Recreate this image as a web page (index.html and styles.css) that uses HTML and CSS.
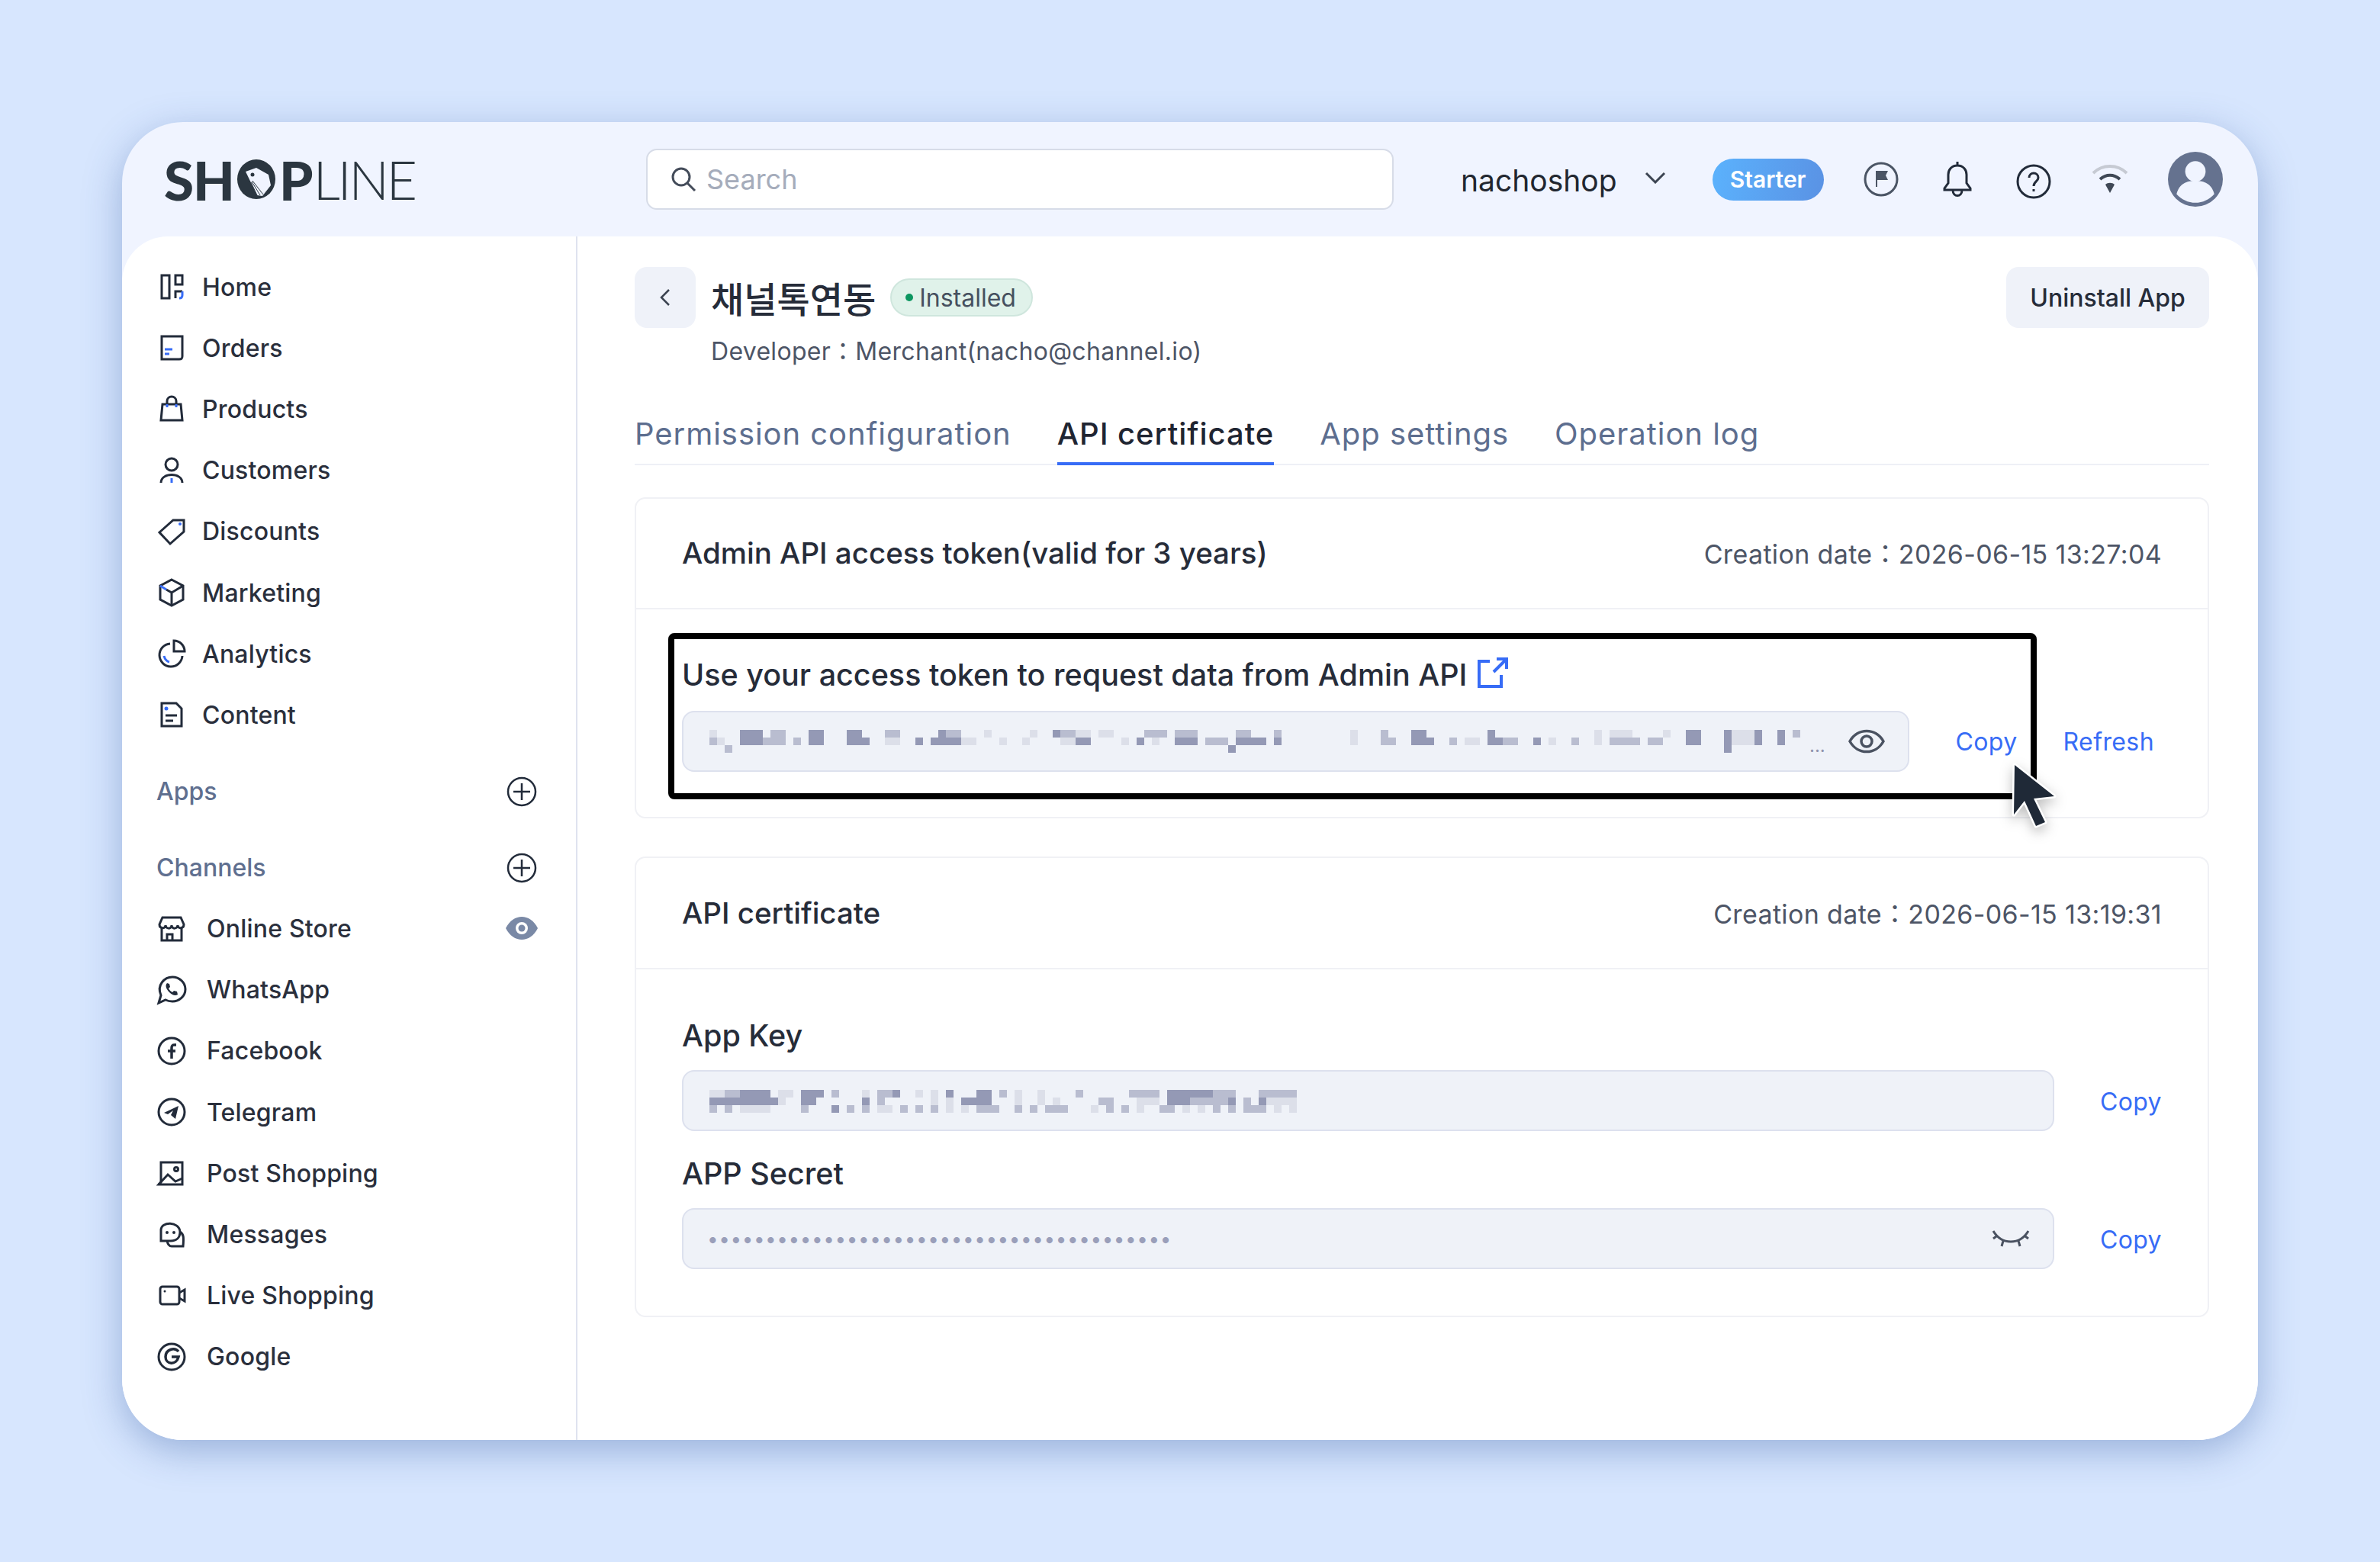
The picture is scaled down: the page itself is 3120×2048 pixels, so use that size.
FILE: index.html
```html
<!DOCTYPE html>
<html lang="en">
<head>
    <meta charset="UTF-8">
    <title>SHOPLINE</title>
    <link rel="stylesheet" href="styles.css">
</head>
<body>
<div class="window">
    <header class="topbar">
        <div class="logo">
            <span class="logo-b">SH</span>
            <svg class="logo-o" width="50" height="52" viewBox="0 0 50 52">
                <ellipse cx="25" cy="26" rx="25" ry="26" fill="#2b3640"/>
                <path d="M11 16 25 11l16 9 3 14-11 14-7-1z" fill="#f0f4ff"/>
                <path d="M26 47 18 30M30 47 19 29M34 46 20 28" stroke="#2b3640" stroke-width="1" fill="none"/>
                <circle cx="20" cy="20" r="2.5" fill="#2b3640"/>
            </svg>
            <span class="logo-b">P</span>
            <span class="logo-l">LINE</span>
        </div>
        <div class="search">
            <svg class="ico" width="38" height="38" viewBox="0 0 38 38"><circle cx="16" cy="16" r="11"/><path d="m24 24 10 10"/></svg>
            <span>Search</span>
        </div>
        <div class="shop">nachoshop</div>
        <svg class="ico chev" width="28" height="16" viewBox="0 0 28 16"><path d="m2 2 12 12L26 2"/></svg>
        <div class="plan">Starter</div>
        <div class="tools">
            <svg class="ico" width="48" height="48" viewBox="0 0 48 48"><circle cx="24" cy="24" r="21" stroke="#4b5565"/><path d="M17 13h16l-3 6 3 6H19v9h-2z" fill="#4b5565" stroke="none"/></svg>
            <svg class="ico" width="48" height="48" viewBox="0 0 48 48"><path d="M24 1v5M24 6c-8 0-12 6-12 12v11l-5 7v2h34v-2l-5-7V18c0-6-4-12-12-12zM18 38c0 10 12 10 12 0"/></svg>
            <svg class="ico tool-low" width="48" height="48" viewBox="0 0 48 48"><circle cx="24" cy="24" r="21"/><path d="M18 19c0-8 12-8 12 0 0 5-6 5-6 11"/><path d="M24 34v3"/></svg>
            <svg width="48" height="40" viewBox="0 0 48 40"><path d="M2 12C14 0 34 0 46 12" fill="none" stroke="#c6cad3" stroke-width="4"/><path d="M11 20c8-7 18-7 26 0M17 26" fill="none" stroke="#3f4856" stroke-width="4"/><path d="M18 27l6 11 6-11c-3-3-9-3-12 0z" fill="#3f4856"/></svg>
            <svg class="avatar" width="72" height="72" viewBox="0 0 70 70"><circle cx="35" cy="35" r="35" fill="#65728f"/><circle cx="35" cy="25" r="13" fill="#f0f4ff"/><path d="M11 54c3-13 13-17 24-17s21 4 24 17c-6 7-15 11-24 11s-18-4-24-11z" fill="#f0f4ff"/></svg>
        </div>
    </header>

    <div class="body">
        <aside class="side">
            <a class="item"><svg class="ico nav-ico" viewBox="0 0 40 40"><rect x="7" y="5" width="10" height="30"/><rect x="25" y="5" width="9" height="12"/><path d="M25 35v-9h9"/><path class="acc" d="M34 26v5c0 3-2 4-4 4"/></svg>Home</a>
            <a class="item"><svg class="ico nav-ico" viewBox="0 0 40 40"><path d="M7 5h27v26c0 3-1 4-4 4H7z"/><path class="acc" d="M11 22h10M11 28h6"/></svg>Orders</a>
            <a class="item"><svg class="ico nav-ico" viewBox="0 0 40 40"><path d="M8 14h24l2 21H6z"/><path d="M14 14V10c0-8 12-8 12 0v4"/><path class="acc" d="M14 14v4M26 14v4"/></svg>Products</a>
            <a class="item"><svg class="ico nav-ico" viewBox="0 0 40 40"><circle cx="20" cy="12" r="8"/><path d="M6 36c0-14 28-14 28 0"/><path class="acc" d="M20 30v6"/></svg>Customers</a>
            <a class="item"><svg class="ico nav-ico" viewBox="0 0 40 40"><path d="M22 5h14v15L18 36 4 21z"/><circle class="acc-fill" cx="31" cy="10" r="2"/></svg>Discounts</a>
            <a class="item"><svg class="ico nav-ico" viewBox="0 0 40 40"><path d="m20 3 15 8v18l-15 8-15-8V11z"/><path d="M35 11 20 20v17M13 16l7 4"/><path class="acc" d="m5 11 8 5"/></svg>Marketing</a>
            <a class="item"><svg class="ico nav-ico" viewBox="0 0 40 40"><path d="M18 7a15 15 0 1 0 16 16"/><path d="M23 3a14 14 0 0 1 14 14H23z"/><path class="acc" d="M10 23c1 4 3 7 7 8"/></svg>Analytics</a>
            <a class="item"><svg class="ico nav-ico" viewBox="0 0 40 40"><path d="M7 5h19l7 7v23H7z"/><path d="M12 21h15M12 28h10"/><circle class="acc-fill" cx="13" cy="12" r="2.5"/></svg>Content</a>

            <div class="group first">Apps<svg class="ico plus" viewBox="0 0 40 40"><circle cx="20" cy="20" r="18"/><path d="M20 9v22M9 20h22"/></svg></div>
            <div class="group chan-head">Channels<svg class="ico plus" viewBox="0 0 40 40"><circle cx="20" cy="20" r="18"/><path d="M20 9v22M9 20h22"/></svg></div>

            <a class="item channel"><svg class="ico nav-ico" viewBox="0 0 40 40"><path d="M8 5h24l4 9c0 6-8 6-8 1 0 5-8 6-8 0 0 6-8 5-8 0 0 5-8 5-8-1z"/><path d="M7 19v16h26V19M14 35v-8h7v8"/></svg>Online Store<svg class="eye-fill" width="42" height="30" viewBox="0 0 42 30"><path d="M0 15C10-5 32-5 42 15 32 35 10 35 0 15z" fill="#7a89a6"/><circle cx="21" cy="15" r="8" fill="#fff"/><circle cx="21" cy="15" r="4.5" fill="#7a89a6"/></svg></a>
            <a class="item channel"><svg class="ico nav-ico" viewBox="0 0 40 40"><path d="M3 37l3-10C0 13 11 3 21 3c9 0 17 7 17 16s-8 16-17 16c-4 0-7-1-9-2z"/><path d="M14 11c-3 3-1 8 3 12s8 5 11 3l-1-4-4-1-2 2c-2-1-4-3-5-5l2-2-1-4z" fill="#222b3a" stroke="none"/></svg>WhatsApp</a>
            <a class="item channel"><svg class="ico nav-ico" viewBox="0 0 40 40"><circle cx="20" cy="20" r="17"/><path d="M26 12h-2c-3 0-4 1-4 4v14M15 20h10" stroke-width="3.5"/></svg>Facebook</a>
            <a class="item channel"><svg class="ico nav-ico" viewBox="0 0 40 40"><ellipse cx="20" cy="20" rx="17" ry="17"/><path d="M10 21 29 12l-4 17-6-5 3-6-7 5z" fill="#222b3a" stroke="none"/></svg>Telegram</a>
            <a class="item channel"><svg class="ico nav-ico" viewBox="0 0 40 40"><path d="M6 6h28v29H3l3-3z"/><path d="M3 35l12-13 10 9 9-4"/><circle cx="26" cy="15" r="2.5"/></svg>Post Shopping</a>
            <a class="item channel"><svg class="ico nav-ico" viewBox="0 0 40 40"><path d="M6 28V14C6 2 30 2 31 16c0 8-5 12-12 12z"/><path d="M31 16c5 3 5 8 4 19H20c-3 0-5-2-6-7"/><circle class="dark-fill" cx="14" cy="17" r="2"/><circle class="dark-fill" cx="23" cy="17" r="2"/></svg>Messages</a>
            <a class="item channel"><svg class="ico nav-ico" viewBox="0 0 40 40"><rect x="5" y="8" width="25" height="23" rx="3"/><path d="M30 16l7-4v15l-7-4"/><circle class="dark-fill" cx="11" cy="14" r="1.5"/></svg>Live Shopping</a>
            <a class="item channel"><svg class="ico nav-ico" viewBox="0 0 40 40"><circle cx="20" cy="20" r="17"/><path d="M29 13c-5-6-17-3-17 7s14 12 17 0H20" stroke-width="3.5"/></svg>Google</a>
        </aside>

        <main class="main">
            <div class="title-row">
                <div class="back"><svg class="ico" width="16" height="26" viewBox="0 0 16 26"><path d="M13 3 3 13l10 10"/></svg></div>
                <h1>채널톡연동</h1>
                <span class="badge"><i></i>Installed</span>
                <button class="uninstall">Uninstall App</button>
            </div>
            <p class="dev">Developer：Merchant(nacho@channel.io)</p>

            <nav class="tabs">
                <a>Permission configuration</a>
                <a class="cur">API certificate</a>
                <a>App settings</a>
                <a>Operation log</a>
            </nav>

            <section class="card token-card">
                <div class="card-head">
                    <h2>Admin API access token(valid for 3 years)</h2>
                    <span>Creation date：2026-06-15 13:27:04</span>
                </div>
                <div class="card-body">
                    <h3 class="token-title">Use your access token to request data from Admin API
                        <svg class="link" width="40" height="40" viewBox="0 0 40 40"><path d="M16 5H2v33h29V23M21 19 38 2M25 2h13v13"/></svg>
                    </h3>
                    <div class="row">
                        <div class="field">
                            <svg class="blur" width="1440" height="30" viewBox="0 0 144 3">
                                <path class="px1" d="M4 .5h3M13 .5h2M18 .5h2M30 .5h1M45 .5h1M4 1.5h3M13 1.5h2M18 1.5h3M27 1.5h1M29 1.5h4M48 1.5h2M56 1.5h1M61 1.5h3M69 1.5h4M74 1.5h1M68 2.5h1M92 .5h2M102 .5h1M128 .5h2M133 .5h1M137 .5h1M140 .5h1M92 1.5h3M102 1.5h2M108 1.5h1M128 1.5h2M133 1.5h1M137 1.5h1M140 1.5h1M133 2.5h1"/>
                                <path class="px2" d="M8 .5h2M23 .5h2M31 .5h2M46 .5h2M57 .5h3M61 .5h3M69 .5h2M74 .5h1M7 1.5h3M11 1.5h1M0 1.5h1M65 1.5h3M88 .5h1M97 1.5h1M104 1.5h2M113 1.5h1M118 1.5h4M123 1.5h2M88 1.5h2M142 .5h1M2 2.5h1"/>
                                <path class="px3" d="M0 .5h1M36 .5h1M42 .5h1M48 .5h2M51 .5h2M23 1.5h2M33 1.5h2M38 1.5h1M41 1.5h1M46 1.5h2M54 1.5h1M58 1.5h1M1 1.5h1M84 .5h1M116 .5h1M118 .5h3M125 .5h1M134 .5h3M84 1.5h1M99 1.5h2M110 1.5h1M116 1.5h1M134 1.5h3"/>
                            </svg>
                            <span class="dots3">...</span>
                            <svg class="ico eye" width="48" height="36" viewBox="0 0 48 36"><path d="M2 18C12 0 36 0 46 18 36 36 12 36 2 18z"/><circle cx="24" cy="18" r="7"/></svg>
                        </div>
                        <a class="act first-act">Copy</a>
                        <a class="act last-act">Refresh</a>
                    </div>
                </div>
            </section>

            <section class="card cert-card">
                <div class="card-head">
                    <h2>API certificate</h2>
                    <span>Creation date：2026-06-15 13:19:31</span>
                </div>
                <div class="card-body cert-body">
                    <h3>App Key</h3>
                    <div class="row">
                        <div class="field">
                            <svg class="blur" width="770" height="30" viewBox="0 0 77 3">
                                <path class="px1" d="M4 .5h4M12 .5h3M24 .5h1M31 .5h1M35 .5h2M60 .5h6M0 1.5h9M12 1.5h2M20 1.5h1M33 1.5h4M60 1.5h3M68 1.5h1M72 1.5h1M16 2.5h1"/>
                                <path class="px2" d="M2 .5h2M16 .5h1M22 .5h2M38 .5h1M48 .5h1M55 .5h4M66 .5h2M68 .5h1M72 .5h5M22 1.5h1M51 1.5h2M63 1.5h5M70 1.5h1M0 2.5h1M2 2.5h1M12 2.5h1M18 2.5h1M20 2.5h1M25 2.5h1M27 2.5h1M29 2.5h1M35 2.5h3M40 2.5h1M42 2.5h1M44 2.5h3M52 2.5h1M54 2.5h1M59 2.5h2M66 2.5h1M68 2.5h1M70 2.5h3"/>
                                <path class="px3" d="M0 .5h2M9 .5h2M20 .5h1M27 .5h1M29 .5h1M40 .5h1M43 .5h1M9 1.5h1M29 1.5h1M31 1.5h1M40 1.5h1M43 1.5h1M45 1.5h1M56 1.5h3M73 1.5h4M4 2.5h4M22 2.5h2M31 2.5h1M33 2.5h1M50 2.5h1M56 2.5h1M62 2.5h1M64 2.5h1M74 2.5h1M76 2.5h1"/>
                            </svg>
                        </div>
                        <a class="act">Copy</a>
                    </div>
                    <h3 class="second">APP Secret</h3>
                    <div class="row">
                        <div class="field">
                            <span class="secret">••••••••••••••••••••••••••••••••••••••••</span>
                            <svg class="ico eye-shut" width="50" height="24" viewBox="0 0 50 24"><path d="M2 2c6 10 14 14 23 14s17-4 23-14M6 9l-4 3M15 15l-2 7M35 15l2 7M44 9l4 3"/></svg>
                        </div>
                        <a class="act">Copy</a>
                    </div>
                </div>
            </section>
        </main>
    </div>

    <div class="mark"></div>
    <svg class="cursor" width="80" height="100" viewBox="0 0 80 100"><path d="M11 8 63 49 36 52 51 83 39 88 24 55 10 73z" fill="#1f2937" stroke="#fff" stroke-width="5" stroke-linejoin="round" paint-order="stroke"/></svg>
</div>
</body>
</html>
```

FILE: styles.css
```css
*{
    box-sizing: border-box;
}
body{
    margin: 0;
    padding: 160px;
    width: 3120px;
    height: 2048px;
    background-color: #d7e6fe;
    font-family: Inter, "Noto Sans CJK KR", sans-serif;
    color: #262c39;
}
h1,h2,h3,p{
    margin: 0;
    font-weight: 500;
}
a{
    text-decoration: none;
    color: inherit;
}
.ico{
    fill: none;
    stroke: #222b3a;
    stroke-width: 3;
    flex: none;
}
.acc{
    stroke: #376cf6;
}
.acc-fill{
    fill: #376cf6;
    stroke: none;
}
.dark-fill{
    fill: #222b3a;
    stroke: none;
}
.window{
    position: relative;
    width: 2800px;
    height: 1728px;
    background-color: #f0f4ff;
    border-radius: 80px;
    box-shadow: 0 14px 50px rgba(50,90,160,.38);
    display: flex;
    flex-direction: column;
}

/* top bar */
.topbar{
    height: 150px;
    flex: none;
    display: flex;
    align-items: center;
    padding: 0 48px 0 55px;
}
.logo{
    width: 632px;
    flex: none;
    display: flex;
    align-items: center;
    font-family: Lato, Inter, sans-serif;
    font-size: 71px;
    line-height: 1;
    color: #2b3640;
}
.logo-b{
    font-weight: 900;
    letter-spacing: -1px;
}
.logo-l{
    font-weight: 300;
    font-size: 70px;
    letter-spacing: -3.5px;
    margin-left: 1px;
}
.logo-o{
    margin: 0 5px 0 4px;
}
.search{
    width: 980px;
    flex: none;
    height: 80px;
    background-color: #fff;
    border: 2px solid #d7dce8;
    border-radius: 14px;
    display: flex;
    align-items: center;
    gap: 11px;
    padding-left: 28px;
    font-size: 36px;
    color: #a5acbb;
}
.search .ico{
    stroke: #444c5a;
}
.shop{
    margin-left: 88px;
    padding-top: 2px;
    font-size: 39px;
    color: #21262f;
}
.chev{
    margin-left: 36px;
    margin-top: -4px;
    stroke: #3c4452;
}
.plan{
    margin-left: 61px;
    width: 146px;
    height: 55px;
    flex: none;
    border-radius: 28px;
    background: linear-gradient(100deg,#5bb2fd,#5a92e4);
    color: #fff;
    font-size: 30px;
    font-weight: 600;
    display: flex;
    align-items: center;
    justify-content: center;
}
.tools{
    margin-left: 51px;
    display: flex;
    align-items: center;
    gap: 52px;
}
.tools .tool-low{
    margin-top: 6px;
}

/* page body */
.body{
    flex: 1;
    display: flex;
    background-color: #fff;
    border-radius: 60px 60px 80px 80px;
    min-height: 0;
}
.side{
    width: 597px;
    flex: none;
    border-right: 2px solid #dfe3ef;
    padding-top: 26px;
}
.item{
    height: 80.2px;
    display: flex;
    align-items: center;
    padding-left: 45px;
    font-size: 32px;
    font-weight: 500;
    color: #2a2f3c;
    letter-spacing: .2px;
}
.nav-ico{
    width: 40px;
    height: 40px;
    margin-right: 20px;
}
.channel .nav-ico{
    margin-right: 26px;
}
.eye-fill{
    margin-left: auto;
    margin-right: 50px;
    margin-top: -2px;
}
.group{
    height: 100px;
    display: flex;
    align-items: center;
    justify-content: space-between;
    padding: 0 51px 0 45px;
    font-size: 32px;
    font-weight: 500;
    color: #5f6f8f;
}
.group.first{
    margin-top: 10px;
}
.group.chan-head{
    height: 80px;
    margin-top: 10px;
}
.plus{
    width: 40px;
    height: 40px;
    stroke-width: 2.5;
}

/* main column */
.main{
    flex: 1;
    padding: 40px 64px 0 75px;
    min-width: 0;
}
.title-row{
    display: flex;
    align-items: center;
    height: 80px;
}
.back{
    width: 80px;
    height: 80px;
    border-radius: 16px;
    background-color: #eff2f9;
    display: flex;
    align-items: center;
    justify-content: center;
}
.back .ico{
    stroke: #3b4350;
    stroke-width: 2.5;
}
h1{
    margin-left: 20px;
    padding-bottom: 2px;
    font-size: 47px;
    color: #262c39;
}
.badge{
    margin-left: 19px;
    height: 50px;
    padding: 0 20px 0 18px;
    border-radius: 25px;
    background-color: #e0f2ea;
    border: 2px solid #cfe6dd;
    display: flex;
    align-items: center;
    font-size: 32px;
    color: #46505f;
}
.badge i{
    width: 10px;
    height: 10px;
    border-radius: 50%;
    background-color: #0c9660;
    margin-right: 8px;
}
.uninstall{
    margin-left: auto;
    width: 266px;
    height: 80px;
    border: 0;
    border-radius: 16px;
    background-color: #eff2f9;
    font: 500 32px Inter, sans-serif;
    color: #262c39;
}
.dev{
    margin: 11px 0 0 100px;
    font-size: 32px;
    line-height: 40px;
    font-weight: 400;
    letter-spacing: .3px;
    color: #4d5566;
}
.tabs{
    margin-top: 49px;
    height: 80px;
    display: flex;
    gap: 60px;
    border-bottom: 2px solid #eef0f6;
    font-size: 40px;
    letter-spacing: .95px;
    color: #5d6e8f;
}
.tabs a{
    height: 80px;
    display: flex;
    align-items: center;
    padding-bottom: 4px;
}
.tabs a.cur{
    color: #1f2532;
    font-weight: 500;
    border-bottom: 4px solid #376cf6;
    padding-bottom: 0;
}
.card{
    border: 2px solid #f0f1f5;
    border-radius: 14px;
    margin-top: 42px;
}
.cert-card{
    margin-top: 50px;
}
.card-head{
    height: 146px;
    display: flex;
    align-items: center;
    justify-content: space-between;
    padding: 0 60px;
    border-bottom: 2px solid #f0f1f5;
    font-size: 34px;
    letter-spacing: .35px;
    color: #4d5566;
}
.token-card .card-head{
    height: 145px;
    padding-bottom: 2px;
}
.cert-card .card-head{
    padding-bottom: 1px;
}
h2{
    font-size: 38.5px;
    letter-spacing: 0;
    color: #262c39;
}
.card-body{
    padding: 60px 60px 61px;
}
.token-card .card-body{
    padding-top: 64px;
    padding-bottom: 59px;
}
h3{
    font-size: 39.5px;
    line-height: 44px;
    font-weight: 550;
    color: #262c39;
}
.token-title{
    display: flex;
    align-items: center;
    gap: 14px;
    height: 44px;
    margin-bottom: 25px;
}
.link{
    fill: none;
    stroke: #376cf6;
    stroke-width: 4;
    margin-top: -6px;
}
.cert-body{
    padding-top: 65px;
}
.cert-body h3{
    margin-bottom: 23px;
}
.cert-body h3.second{
    margin-top: 34px;
}
.cert-body .blur{
    margin-top: 2px;
}
.cert-body .act{
    padding-top: 2px;
}
.row{
    display: flex;
    align-items: center;
}
.field{
    flex: 1;
    height: 80px;
    display: flex;
    align-items: center;
    background-color: #eff2f8;
    border: 2px solid #dde1ee;
    border-radius: 16px;
    padding: 0 30px 0 34px;
}
.blur{
    shape-rendering: crispEdges;
    fill: none;
    stroke-width: 1;
    flex: none;
}
.px1{
    stroke: #9499b5;
}
.px2{
    stroke: #b9bdd0;
}
.px3{
    stroke: #dcdfe9;
}
.dots3{
    margin-left: 2px;
    font-size: 24px;
    color: #8f94ad;
    padding-top: 10px;
}
.eye{
    margin-left: auto;
    stroke: #4a5261;
    stroke-width: 3.5;
}
.secret{
    margin-left: -3px;
    font-size: 26px;
    letter-spacing: .6px;
    color: #9a9fba;
}
.eye-shut{
    margin-left: auto;
    stroke: #4a5261;
    stroke-width: 3;
}
.act{
    margin-left: 60px;
    font-size: 32px;
    letter-spacing: .4px;
    color: #376cf6;
}
.last-act{
    margin-right: 10px;
}

/* highlight drawn on top of the token row */
.mark{
    position: absolute;
    left: 716px;
    top: 670px;
    width: 1794px;
    height: 218px;
    border: 8px solid #000;
    border-radius: 8px;
}
.cursor{
    position: absolute;
    left: 2470px;
    top: 835px;
    filter: drop-shadow(0 6px 8px rgba(0,0,0,.25));
}
```
